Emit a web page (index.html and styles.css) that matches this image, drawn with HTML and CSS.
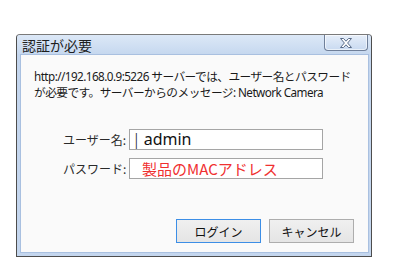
FILE: index.html
```html
<!DOCTYPE html>
<html lang="ja">
<head>
  <meta charset="UTF-8" />
  <title>認証が必要</title>
  <link rel="stylesheet" href="styles.css">
</head>
<body>
  <div class="window">
    <div class="titlebar">
      <span class="title">認証が必要</span>
      <div class="close-btn">
        <svg width="14" height="10" viewBox="0 0 14 10">
          <path d="M1.5 0.5 H4.5 L7 3.2 L9.5 0.5 H12.5 L8.6 5 L12.5 9.5 H9.5 L7 6.8 L4.5 9.5 H1.5 L5.4 5 Z"
                fill="#fff" stroke="#5a6d8a" stroke-width="1" stroke-linejoin="round"/>
        </svg>
      </div>
    </div>
    <div class="content">
      <p class="message">http://192.168.0.9:5226 サーバーでは、ユーザー名とパスワード<br>が必要です。サーバーからのメッセージ: Network Camera</p>

      <div class="form">
        <div class="row">
          <label class="label">ユーザー名:</label>
          <div class="input"><span class="caret">|</span>admin</div>
        </div>
        <div class="row">
          <label class="label">パスワード:</label>
          <div class="input hint">製品のMACアドレス</div>
        </div>
      </div>

      <div class="buttons">
        <button class="btn default">ログイン</button>
        <button class="btn">キャンセル</button>
      </div>
    </div>
  </div>
</body>
</html>
```

FILE: styles.css
```css
body {
  margin: 0;
  background: #fff;
  font-family: 'Segoe UI', 'Noto Sans', 'Noto Sans CJK JP', sans-serif;
}

.window {
  margin: 34px 0 0 16px;
  width: 349px;
  height: 218px;
  border: 1px solid #4d4d4d;
  border-top-color: #7a7a7a;
  border-radius: 4px 4px 0 0;
  background: #c4d6ee;
  padding: 0 2px 3px 3px;
  display: flex;
  flex-direction: column;
  box-sizing: content-box;
}

.titlebar {
  height: 19px;
  display: flex;
  align-items: flex-start;
  justify-content: space-between;
  background: linear-gradient(to bottom, #dce8f7, #c6d8ef);
  margin: 0 -2px 0 -3px;
  padding: 0 3px 0 5px;
  border-radius: 3px 3px 0 0;
}

.title {
  font-family: 'Noto Sans CJK JP', sans-serif;
  font-size: 14px;
  line-height: 19px;
  color: #1e1e1e;
  margin-top: 1px;
}

.close-btn {
  width: 42px;
  height: 15px;
  border: 1px solid #6f7f99;
  border-top: none;
  border-radius: 0 0 4px 4px;
  background: linear-gradient(to bottom, #e6eef9, #c9daf1);
  display: flex;
  align-items: center;
  justify-content: center;
  box-shadow: inset 0 0 0 1px rgba(255, 255, 255, 0.6);
}

.content {
  flex: 1;
  background: #fafafa;
  border: 1px solid #a9c0e0;
  padding: 13px 14px 9px 13px;
  display: flex;
  flex-direction: column;
}

.message {
  margin: 0;
  font-family: 'Noto Sans', 'Noto Sans CJK JP', sans-serif;
  font-size: 11.7px;
  line-height: 16px;
  color: #1a1a1a;
  letter-spacing: -0.55px;
  white-space: nowrap;
}

.form {
  margin-top: 29px;
  margin-left: 29px;
  display: flex;
  flex-direction: column;
  gap: 8px;
}

.row {
  display: flex;
  align-items: center;
}

.label {
  width: 66px;
  font-family: 'Noto Sans CJK JP', sans-serif;
  font-size: 12px;
  color: #2a2a2a;
}

.input {
  width: 190px;
  height: 19px;
  border: 1px solid #a5a5a5;
  background: #fff;
  font-family: 'Noto Sans', 'Noto Sans CJK JP', sans-serif;
  font-size: 16px;
  line-height: 19px;
  color: #111;
  padding-left: 2px;
  white-space: nowrap;
}

.caret {
  font-weight: 300;
  margin-right: 3px;
}

.input.hint {
  font-family: 'Noto Sans CJK JP', sans-serif;
  font-size: 15px;
  color: #f03030;
  padding-left: 12px;
  width: 180px;
}

.buttons {
  margin-top: auto;
  display: flex;
  justify-content: flex-end;
  gap: 8px;
}

.btn {
  width: 85px;
  height: 24px;
  border: 1px solid #adadad;
  background: linear-gradient(to bottom, #f0f0f0, #e5e5e5);
  font-family: 'Noto Sans CJK JP', sans-serif;
  font-size: 12px;
  color: #111;
  padding: 0;
}

.btn.default {
  border-color: #3c8ee6;
}
```
